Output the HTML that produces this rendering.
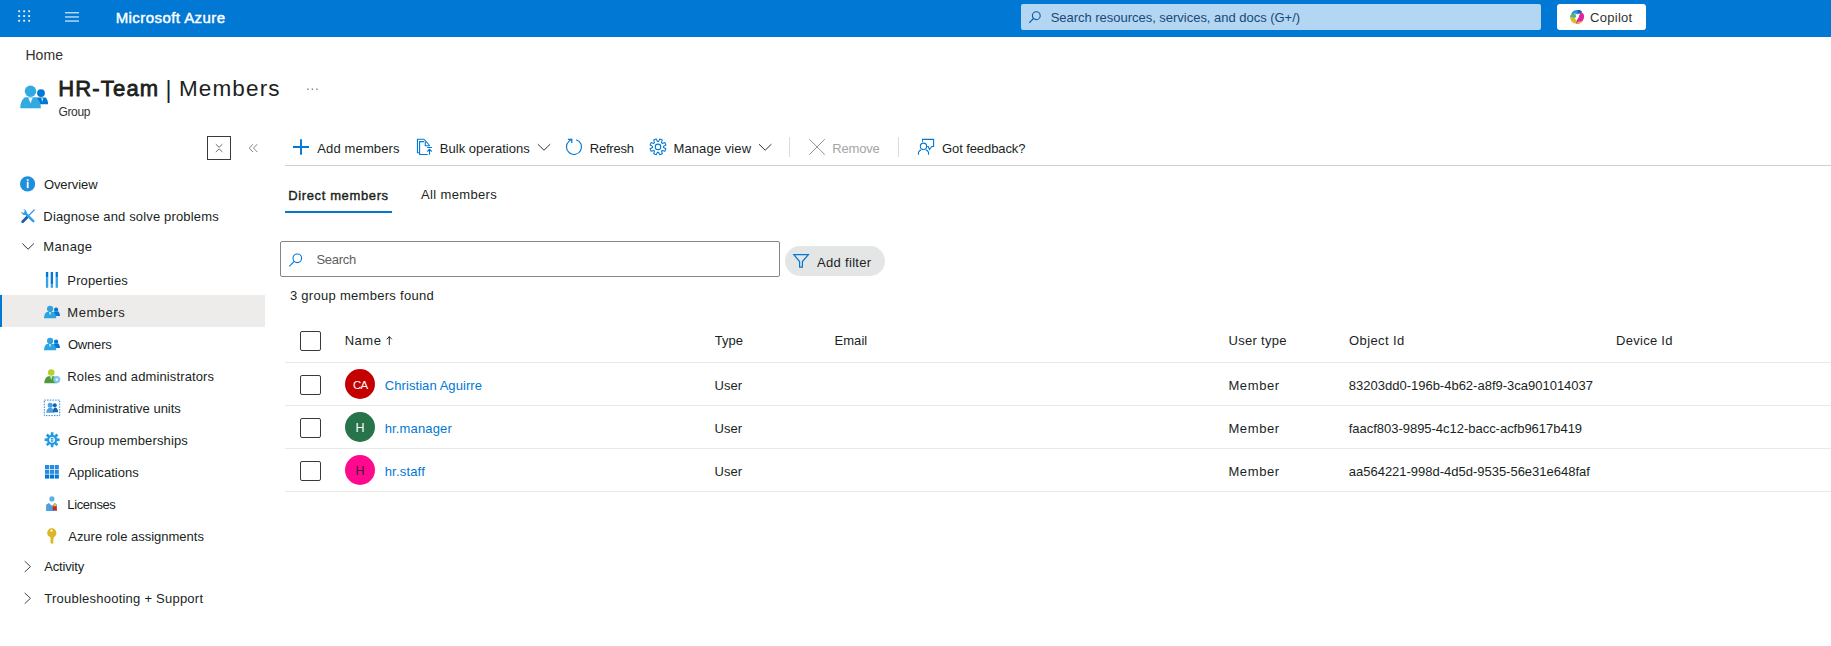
<!DOCTYPE html>
<html><head><meta charset="utf-8">
<style>
*{box-sizing:border-box;margin:0;padding:0}
html,body{width:1831px;height:646px;overflow:hidden;background:#fff}
body{font-family:"Liberation Sans",sans-serif;font-size:13px;color:#201f1e;position:relative}
.t{position:absolute;white-space:nowrap;line-height:20px}
#txt{position:absolute;left:0;top:0;width:1831px;height:646px}
.a{position:absolute}
svg{position:absolute;overflow:visible}
.hl{position:absolute;left:285px;width:1546px;height:1px;background:#e9e9e9}
.cb{position:absolute;left:300px;width:21px;height:20px;border:1px solid #3b3a39;border-radius:2px;background:#fff}
.av{position:absolute;left:345px;width:30px;height:30px;border-radius:50%}
</style></head><body>
<!-- top bar -->
<div class="a" style="left:0;top:0;width:1831px;height:37px;background:#0078d4"></div>
<svg style="left:0;top:0" width="100" height="37" viewBox="0 0 100 37">
  <g fill="#fff" fill-opacity=".88">
    <rect x="18.2" y="10.3" width="1.9" height="1.9"/><rect x="23.2" y="10.3" width="1.9" height="1.9"/><rect x="28.2" y="10.3" width="1.9" height="1.9"/>
    <rect x="18.2" y="15.1" width="1.9" height="1.9"/><rect x="23.2" y="15.1" width="1.9" height="1.9"/><rect x="28.2" y="15.1" width="1.9" height="1.9"/>
    <rect x="18.2" y="19.8" width="1.9" height="1.9"/><rect x="23.2" y="19.8" width="1.9" height="1.9"/><rect x="28.2" y="19.8" width="1.9" height="1.9"/>
  </g>
  <g fill="#fff" fill-opacity=".8">
    <rect x="65" y="12.1" width="14" height="1.3"/><rect x="65" y="16.3" width="14" height="1.3"/><rect x="65" y="20.4" width="14" height="1.3"/>
  </g>
</svg>
<div class="a" style="left:1021px;top:4px;width:520px;height:26px;background:#b3d6f2;border-radius:2px"></div>
<svg style="left:1028px;top:10px" width="14" height="14" viewBox="0 0 14 14"><circle cx="8.3" cy="5.7" r="3.9" fill="none" stroke="#0f5a9e" stroke-width="1.1"/><path d="M5.5 8.5L1.2 12.8" stroke="#0f5a9e" stroke-width="1.1" fill="none"/></svg>
<div class="a" style="left:1557px;top:4px;width:89px;height:26px;background:#fff;border-radius:3px"></div>
<svg style="left:1569px;top:9px" width="16" height="16" viewBox="0 0 16 16">
  <path d="M2.2 5.2C3 2.3 5.5 0.9 8.5 1c2.2 0 3.6.6 4.3 2L9 5.6 6.2 4.4z" fill="#2a8fe0"/>
  <path d="M8.5 1c2.5 0 4 .8 4.6 2.2l-2.4 1.6L8.9 3.4z" fill="#1d5fb0"/>
  <path d="M2.2 5.2L6.4 4.6 7.2 8 5.5 9 1 8.6C.9 7.3 1.4 6.2 2.2 5.200z" fill="#4fb86a"/>
  <path d="M1 8.600l4.600.4L7.500 11.600 6.500 14.600C3.600 14.300 1.400 12 1 8.600z" fill="#e0b92a"/>
  <path d="M11.200 3.800C14 3.300 15.600 5.500 15 8.500 14.300 12 11.500 15 8 14.800l-1.500-.2L9 9z" fill="#e0249c"/>
  <path d="M6.500 14.600L8 14.800c2.200 0 4-1 5.300-2.800L9.600 12.500z" fill="#e8b52c"/>
  <path d="M10.800 4.200L8.600 6.500 7.400 10.600 9.600 8.200z" fill="#fff"/>
</svg>
<!-- title icon -->
<svg style="left:18px;top:82px" width="32" height="28" viewBox="18 82 32 28">
  <circle cx="41" cy="93.100" r="3.900" fill="#0078d4"/>
  <path d="M36.500 97.600h9.200c1.600 1.800 2.400 4 2.400 6.700H36.500z" fill="#0078d4"/>
  <path d="M41.200 98.200l1.100 3.600 1-3.600z" fill="#fff" fill-opacity=".85"/>
  <circle cx="30.500" cy="91.200" r="5.700" fill="#32a9e1"/>
  <path d="M20.200 108.200c0-5 1.800-8.800 4.600-11h11.400c2.900 2.200 4.700 6 4.700 11z" fill="#32a9e1"/>
  <path d="M28.200 97.400l2.300 6.200 2.300-6.200z" fill="#fff" fill-opacity=".88"/>
  <rect x="25.200" y="104.700" width="1.100" height="1.100" fill="#4ed16b"/><rect x="34.200" y="104.700" width="1.100" height="1.100" fill="#4ed16b"/>
</svg>
<!-- ellipsis -->
<svg style="left:305px;top:86px" width="16" height="6" viewBox="305 86 16 6"><g fill="#7a7a7a"><rect x="307.200" y="88.500" width="1.400" height="1.400"/><rect x="311.700" y="88.500" width="1.400" height="1.400"/><rect x="316.200" y="88.500" width="1.400" height="1.400"/></g></svg>
<!-- collapse buttons -->
<div class="a" style="left:207px;top:136px;width:24px;height:24px;border:1px solid #3b3a39"></div>
<svg style="left:207px;top:136px" width="24" height="24" viewBox="207 136 24 24"><path d="M215.800 144.200l3.300 3.100 3.300-3.100M215.800 152l3.300-3.100 3.300 3.100" fill="none" stroke="#605e5c" stroke-width=".9"/></svg>
<svg style="left:246px;top:140px" width="16" height="16" viewBox="246 140 16 16"><path d="M253 144.200l-3.700 3.900 3.700 3.900M257.200 144.200l-3.700 3.900 3.700 3.900" fill="none" stroke="#6b7785" stroke-width=".9"/></svg>

<!-- sidebar selection -->
<div class="a" style="left:0;top:295px;width:265px;height:32px;background:#edecea"></div>
<div class="a" style="left:0;top:295px;width:2px;height:32px;background:#0078d4"></div>
<!--SI0--><svg style="left:0;top:0" width="270" height="646" viewBox="0 0 270 646">
<circle cx="27.600" cy="183.900" r="7.600" fill="#1f8fdd"/>
<rect x="26.800" y="181.700" width="1.800" height="6.400" fill="#fff"/><rect x="26.800" y="179.200" width="1.800" height="1.600" fill="#fff"/>
<path d="M34.600 209.600l-6.500 6.600" stroke="#1e8ae0" stroke-width="1.200" fill="none"/>
<path d="M27.300 217l-4.700 4.800" stroke="#1c5fa8" stroke-width="2.700" stroke-linecap="round" fill="none"/>
<path d="M25 212.800l8.300 8.400" stroke="#2f9fe8" stroke-width="2.500" stroke-linecap="round" fill="none"/>
<path d="M21.300 211.500c0 2.200 1.600 3.700 3.900 3.400l1.500-1.700c.3-2.200-1.200-3.900-3.400-3.900l1.600 1.700-.3 1.700-1.600.4z" fill="#2f9fe8"/>
<path d="M22.300 243.500l5.800 5.700 5.800-5.700" fill="none" stroke="#323130" stroke-width="1"/>
<path d="M24.700 561.200l5.800 5.400-5.800 5.400" fill="none" stroke="#3b4654" stroke-width="1"/>
<path d="M24.700 592.900l5.800 5.400-5.800 5.400" fill="none" stroke="#3b4654" stroke-width="1"/>
<rect x="45.9" y="272" width="2.350" height="5.6" fill="#0078d4"/>
<rect x="45.9" y="277.6" width="2.350" height="10.2" fill="#3aa2e6"/>
<rect x="50.7" y="272" width="2.350" height="12.2" fill="#0078d4"/>
<rect x="50.7" y="284.2" width="2.350" height="3.6" fill="#3aa2e6"/>
<rect x="55.6" y="272" width="2.350" height="5.6" fill="#0078d4"/>
<rect x="55.6" y="277.6" width="2.350" height="10.2" fill="#3aa2e6"/>
<g transform="translate(44 306)"><circle cx="12.100" cy="3.700" r="2.150" fill="#0078d4"/><path d="M9.800 5.500h4.600c.9 1 1.500 2.500 1.600 4.500h-6.200z" fill="#0078d4"/><circle cx="6.100" cy="2.900" r="3.100" fill="#2ea3e0"/><path d="M0 12.300c0-2.900 1-5 2.700-6.200h6.800c1.700 1.200 2.700 3.300 2.700 6.200z" fill="#2ea3e0"/><path d="M5 6.200l1.100 3.100 1.100-3.100z" fill="#fff" fill-opacity=".85"/></g>
<g transform="translate(44 338)"><circle cx="12.100" cy="3.700" r="2.150" fill="#0078d4"/><path d="M9.800 5.500h4.600c.9 1 1.500 2.500 1.600 4.500h-6.200z" fill="#0078d4"/><circle cx="6.100" cy="2.900" r="3.100" fill="#2ea3e0"/><path d="M0 12.300c0-2.900 1-5 2.700-6.200h6.800c1.700 1.200 2.700 3.300 2.700 6.200z" fill="#2ea3e0"/><path d="M5 6.200l1.100 3.100 1.100-3.100z" fill="#fff" fill-opacity=".85"/></g>
<circle cx="51.200" cy="372.500" r="3.300" fill="#b6d12f"/>
<path d="M44.300 383.200c0-3.500 1.500-6 3.800-7h6.200c1.400.7 2.500 2 3 3.600v3.400z" fill="#4f9a3c"/>
<path d="M50 376.300l1.200 3.600 1.200-3.600z" fill="#fff" fill-opacity=".8"/>
<circle cx="56.800" cy="379.600" r="3.500" fill="#7cc4f0"/><circle cx="56.800" cy="379.600" r="1.300" fill="#e8f4fc"/>
<rect x="44.300" y="400.100" width="15.400" height="15.500" fill="none" stroke="#2b88d8" stroke-width="1" stroke-dasharray="1.500 1.200"/>
<circle cx="50.200" cy="405.300" r="2.500" fill="#4aa0e0"/><path d="M46.300 412.800c0-3 1.600-5 3.900-5s3.900 2 3.900 5z" fill="#4aa0e0"/>
<circle cx="54.800" cy="405.200" r="2" fill="#1664b8"/><path d="M52.800 412.200c.2-2.600 1-4.600 2.300-4.600 1.700 0 2.900 1.900 3 4.600z" fill="#1664b8"/>
<path d="M50.65 435.02L50.85 432.30L53.35 432.30L53.55 435.02L54.46 435.39L56.52 433.62L58.28 435.38L56.51 437.44L56.88 438.35L59.60 438.55L59.60 441.05L56.88 441.25L56.51 442.16L58.28 444.22L56.52 445.98L54.46 444.21L53.55 444.58L53.35 447.30L50.85 447.30L50.65 444.58L49.74 444.21L47.68 445.98L45.92 444.22L47.69 442.16L47.32 441.25L44.60 441.05L44.60 438.55L47.32 438.35L47.69 437.44L45.92 435.38L47.68 433.62L49.74 435.39Z" fill="#1e9be2"/>
<circle cx="52.100" cy="439.800" r="2.900" fill="#fff"/><rect x="50.900" y="438" width="2.400" height="3.600" fill="#2b90dd"/><rect x="51.600" y="439" width="1" height="1.400" fill="#fff"/>
<rect x="45.00" y="465.00" width="4.150" height="4.100" fill="#2a8be0"/>
<rect x="49.85" y="465.00" width="4.150" height="4.100" fill="#2a8be0"/>
<rect x="54.70" y="465.00" width="4.150" height="4.100" fill="#2a8be0"/>
<rect x="45.00" y="469.75" width="4.150" height="4.100" fill="#2a8be0"/>
<rect x="49.85" y="469.75" width="4.150" height="4.100" fill="#2a8be0"/>
<rect x="54.70" y="469.75" width="4.150" height="4.100" fill="#2a8be0"/>
<rect x="45.00" y="474.50" width="4.150" height="4.100" fill="#0078d4"/>
<rect x="49.85" y="474.50" width="4.150" height="4.100" fill="#0078d4"/>
<rect x="54.70" y="474.50" width="4.150" height="4.100" fill="#0078d4"/>
<circle cx="51.900" cy="498.900" r="2.600" fill="#5db0ea"/>
<path d="M46.100 511v-6.300l2.800-1.800 3 2.800 3-2.800 1.900 1.500v6.600z" fill="#4a9fe2"/>
<path d="M52.800 511v-4.200l1.900-2.600 2 2.600v4.200l-1.900-1.300z" fill="#d02020"/><circle cx="54.700" cy="505" r="1.500" fill="#f0c020"/>
<path d="M51.500 528.200c2.800 0 4.900 2.100 4.900 4.800 0 1.900-1 3.500-2.600 4.300v1.300l-1 .9 1 1-1 1 1 1-1.700 1.500-1.600-1.300v-5.400c-2-.7-3.300-2.300-3.300-4.300 0-2.700 1.900-4.800 4.300-4.800z" fill="#dcb626"/>
<circle cx="51.500" cy="530.600" r="1.100" fill="#fff"/>
</svg><!--SI1-->
<!--TB0--><svg style="left:0;top:0" width="1831" height="646" viewBox="0 0 1831 646">
<path d="M293 147h16M301 139.2v15.600" stroke="#0078d4" stroke-width="1.900" fill="none"/>
<g fill="none" stroke="#0078d4" stroke-width="1.100"><path d="M419.300 152.700h-1.850v-13.500h6.450l5.800 6.300"/><path d="M424.100 141.650h-4.500v12.850h8.100"/><path d="M425.300 141.700v4h4.400"/><path d="M427.100 147.500h4.800M429.500 154.700v-5.400M427.300 151.500l2.200-2.200 2.200 2.200"/></g>
<path d="M537.8 144.200l6.200 6 6.200-6" fill="none" stroke="#323130" stroke-width="1"/>
<path d="M759.0 144.200l6.200 6 6.200-6" fill="none" stroke="#323130" stroke-width="1"/>
<path d="M576.21 139.68A7.55 7.55 0 1 1 569.15 141.12L571.5 139.500" fill="none" stroke="#0078d4" stroke-width="1.150"/>
<path d="M567.900 139.300h3.900v3.600" fill="none" stroke="#0078d4" stroke-width="1.200"/>
<path d="M658.54 141.43L659.83 139.01L662.29 140.03L661.49 142.65L662.25 143.41L664.87 142.61L665.89 145.07L663.47 146.36L663.47 147.44L665.89 148.73L664.87 151.19L662.25 150.39L661.49 151.15L662.29 153.77L659.83 154.79L658.54 152.37L657.46 152.37L656.17 154.79L653.71 153.77L654.51 151.15L653.75 150.39L651.13 151.19L650.11 148.73L652.53 147.44L652.53 146.36L650.11 145.07L651.13 142.61L653.75 143.41L654.51 142.65L653.71 140.03L656.17 139.01L657.46 141.43Z" fill="none" stroke="#0078d4" stroke-width="1.050" stroke-linejoin="round"/>
<circle cx="658" cy="146.900" r="2.750" fill="none" stroke="#0078d4" stroke-width="1.100"/>
<rect x="789" y="137" width="1" height="20" fill="#dcdbda"/><rect x="898" y="137" width="1" height="20" fill="#dcdbda"/>
<path d="M809.300 139.200l15.500 15.500M824.800 139.200l-15.500 15.500" stroke="#86858a" stroke-width=".9" fill="none"/>
<g fill="none" stroke="#0078d4" stroke-width="1.100"><path d="M922.500 141.800v-2.400h11.100v7.100h-1.800l-2.300 3-1.200-3h-1.200"/><circle cx="923.500" cy="146.300" r="3.150"/><path d="M918.500 154.800v-2.500c.6-1.200 1.500-2 2.700-2.500M928.500 154.800v-2.500c-.6-1.200-1.500-2-2.700-2.500"/></g>
</svg><!--TB1-->
<!-- lines -->
<div class="a" style="left:285px;top:165px;width:1546px;height:1px;background:#d0d0d0"></div>
<div class="a" style="left:285px;top:210.500px;width:107px;height:2.300px;background:#0078d4"></div>
<div class="hl" style="top:362px"></div><div class="hl" style="top:405px"></div><div class="hl" style="top:448px"></div><div class="hl" style="top:491px"></div>
<!-- search row -->
<div class="a" style="left:280px;top:241px;width:500px;height:36px;border:1px solid #8a8583;border-radius:2px"></div>
<svg style="left:288px;top:252px" width="16" height="16" viewBox="288 252 16 16"><circle cx="297.300" cy="258.300" r="4.300" fill="none" stroke="#0078d4" stroke-width="1.100"/><path d="M294.300 261.400l-5 5" stroke="#0078d4" stroke-width="1.100" fill="none"/></svg>
<div class="a" style="left:785px;top:246px;width:100px;height:30px;border-radius:15px;background:#e4e5e5"></div>
<svg style="left:792px;top:252px" width="18" height="18" viewBox="792 252 18 18"><path d="M793.800 254.600h14.600l-6 6.900v5.700h-2.800v-5.700z" fill="none" stroke="#0078d4" stroke-width="1.200" stroke-linejoin="miter"/></svg>
<!-- checkboxes & avatars -->
<div class="cb" style="top:331px"></div><div class="cb" style="top:375px"></div><div class="cb" style="top:418px"></div><div class="cb" style="top:461px"></div>
<div class="av" style="top:369px;background:#c40000"></div>
<div class="av" style="top:412px;background:#27744a"></div>
<div class="av" style="top:455px;background:#ff0a8e"></div>
<!-- sort arrow -->
<svg style="left:384px;top:334px" width="10" height="13" viewBox="384 334 10 13"><path d="M389.300 345v-8.400M386.700 339.300l2.600-2.700 2.600 2.700" fill="none" stroke="#201f1e" stroke-width=".95"/></svg>
<div id="txt">
<div class="t" style="left:115.63px;top:7.80px;font-size:15px;color:#fff;-webkit-text-stroke:0.45px;letter-spacing:0.432px;">Microsoft Azure</div>
<div class="t" style="left:1050.66px;top:7.50px;font-size:13px;color:#19487a;letter-spacing:-0.022px;">Search resources, services, and docs (G+/)</div>
<div class="t" style="left:1590.04px;top:7.50px;font-size:13px;color:#333;letter-spacing:0.289px;">Copilot</div>
<div class="t" style="left:25.45px;top:45.15px;font-size:14px;color:#323130;letter-spacing:0.046px;">Home</div>
<div class="t" style="left:58.22px;top:79.38px;font-size:22px;color:#201f1e;-webkit-text-stroke:0.8px;letter-spacing:1.175px;">HR-Team</div>
<div class="t" style="left:165.52px;top:80.03px;font-size:23px;color:#201f1e;">|</div>
<div class="t" style="left:178.89px;top:79.20px;font-size:22.5px;color:#201f1e;letter-spacing:1.159px;">Members</div>
<div class="t" style="left:58.40px;top:101.84px;font-size:12px;color:#323130;letter-spacing:-0.299px;">Group</div>
<div class="t" style="left:43.92px;top:174.50px;font-size:13px;color:#201f1e;letter-spacing:-0.078px;">Overview</div>
<div class="t" style="left:43.37px;top:206.50px;font-size:13px;color:#201f1e;letter-spacing:0.154px;">Diagnose and solve problems</div>
<div class="t" style="left:43.37px;top:236.50px;font-size:13px;color:#201f1e;letter-spacing:0.335px;">Manage</div>
<div class="t" style="left:67.37px;top:270.50px;font-size:13px;color:#201f1e;letter-spacing:0.126px;">Properties</div>
<div class="t" style="left:67.37px;top:302.50px;font-size:13px;color:#201f1e;letter-spacing:0.519px;">Members</div>
<div class="t" style="left:67.92px;top:334.50px;font-size:13px;color:#201f1e;letter-spacing:-0.177px;">Owners</div>
<div class="t" style="left:67.37px;top:366.50px;font-size:13px;color:#201f1e;letter-spacing:0.126px;">Roles and administrators</div>
<div class="t" style="left:68.22px;top:398.50px;font-size:13px;color:#201f1e;letter-spacing:-0.004px;">Administrative units</div>
<div class="t" style="left:67.90px;top:430.50px;font-size:13px;color:#201f1e;letter-spacing:0.136px;">Group memberships</div>
<div class="t" style="left:68.22px;top:462.50px;font-size:13px;color:#201f1e;letter-spacing:0.042px;">Applications</div>
<div class="t" style="left:67.37px;top:494.50px;font-size:13px;color:#201f1e;letter-spacing:-0.408px;">Licenses</div>
<div class="t" style="left:68.22px;top:526.50px;font-size:13px;color:#201f1e;letter-spacing:-0.008px;">Azure role assignments</div>
<div class="t" style="left:44.22px;top:556.50px;font-size:13px;color:#201f1e;letter-spacing:-0.175px;">Activity</div>
<div class="t" style="left:44.29px;top:588.50px;font-size:13px;color:#201f1e;letter-spacing:0.235px;">Troubleshooting + Support</div>
<div class="t" style="left:317.22px;top:138.50px;font-size:13px;color:#201f1e;letter-spacing:0.143px;">Add members</div>
<div class="t" style="left:439.80px;top:138.50px;font-size:13px;color:#201f1e;letter-spacing:0.028px;">Bulk operations</div>
<div class="t" style="left:589.70px;top:138.50px;font-size:13px;color:#201f1e;letter-spacing:-0.195px;">Refresh</div>
<div class="t" style="left:673.49px;top:138.50px;font-size:13px;color:#201f1e;letter-spacing:0.098px;">Manage view</div>
<div class="t" style="left:832.37px;top:138.50px;font-size:13px;color:#a6a4a2;letter-spacing:-0.220px;">Remove</div>
<div class="t" style="left:942.04px;top:138.50px;font-size:13px;color:#201f1e;letter-spacing:-0.096px;">Got feedback?</div>
<div class="t" style="left:288.24px;top:185.50px;font-size:13px;color:#201f1e;-webkit-text-stroke:0.4px;letter-spacing:0.625px;">Direct members</div>
<div class="t" style="left:421.09px;top:184.50px;font-size:13px;color:#201f1e;letter-spacing:0.346px;">All members</div>
<div class="t" style="left:316.46px;top:249.50px;font-size:13px;color:#605e5c;letter-spacing:-0.281px;">Search</div>
<div class="t" style="left:817.06px;top:252.50px;font-size:13px;color:#201f1e;letter-spacing:0.310px;">Add filter</div>
<div class="t" style="left:289.90px;top:285.50px;font-size:13px;color:#201f1e;letter-spacing:0.291px;">3 group members found</div>
<div class="t" style="left:344.70px;top:330.50px;font-size:13px;color:#201f1e;letter-spacing:0.527px;">Name</div>
<div class="t" style="left:714.83px;top:330.50px;font-size:13px;color:#201f1e;letter-spacing:-0.029px;">Type</div>
<div class="t" style="left:834.44px;top:330.50px;font-size:13px;color:#201f1e;letter-spacing:0.079px;">Email</div>
<div class="t" style="left:1228.61px;top:330.50px;font-size:13px;color:#201f1e;letter-spacing:0.280px;">User type</div>
<div class="t" style="left:1349.10px;top:330.50px;font-size:13px;color:#201f1e;letter-spacing:0.386px;">Object Id</div>
<div class="t" style="left:1616.03px;top:330.50px;font-size:13px;color:#201f1e;letter-spacing:0.285px;">Device Id</div>
<div class="t" style="left:384.84px;top:375.50px;font-size:13px;color:#0078d4;letter-spacing:0.061px;">Christian Aguirre</div>
<div class="t" style="left:384.69px;top:418.50px;font-size:13px;color:#0078d4;letter-spacing:0.146px;">hr.manager</div>
<div class="t" style="left:384.69px;top:461.50px;font-size:13px;color:#0078d4;letter-spacing:0.190px;">hr.staff</div>
<div class="t" style="left:714.46px;top:375.50px;font-size:13px;color:#201f1e;letter-spacing:0.098px;">User</div>
<div class="t" style="left:714.46px;top:418.50px;font-size:13px;color:#201f1e;letter-spacing:0.098px;">User</div>
<div class="t" style="left:714.46px;top:461.50px;font-size:13px;color:#201f1e;letter-spacing:0.098px;">User</div>
<div class="t" style="left:1228.44px;top:375.50px;font-size:13px;color:#201f1e;letter-spacing:0.607px;">Member</div>
<div class="t" style="left:1228.44px;top:418.50px;font-size:13px;color:#201f1e;letter-spacing:0.607px;">Member</div>
<div class="t" style="left:1228.44px;top:461.50px;font-size:13px;color:#201f1e;letter-spacing:0.607px;">Member</div>
<div class="t" style="left:1348.82px;top:375.50px;font-size:13px;color:#201f1e;letter-spacing:-0.003px;">83203dd0-196b-4b62-a8f9-3ca901014037</div>
<div class="t" style="left:1348.73px;top:418.50px;font-size:13px;color:#201f1e;letter-spacing:-0.023px;">faacf803-9895-4c12-bacc-acfb9617b419</div>
<div class="t" style="left:1348.81px;top:461.50px;font-size:13px;color:#201f1e;letter-spacing:-0.012px;">aa564221-998d-4d5d-9535-56e31e648faf</div>
<div class="t" style="left:353.10px;top:375.02px;font-size:11.5px;color:#fff;letter-spacing:-0.971px;">CA</div>
<div class="t" style="left:355.39px;top:417.67px;font-size:12.5px;color:#fff;">H</div>
<div class="t" style="left:355.39px;top:460.67px;font-size:12.5px;color:#3a1c2c;">H</div>
</div>
</body></html>
